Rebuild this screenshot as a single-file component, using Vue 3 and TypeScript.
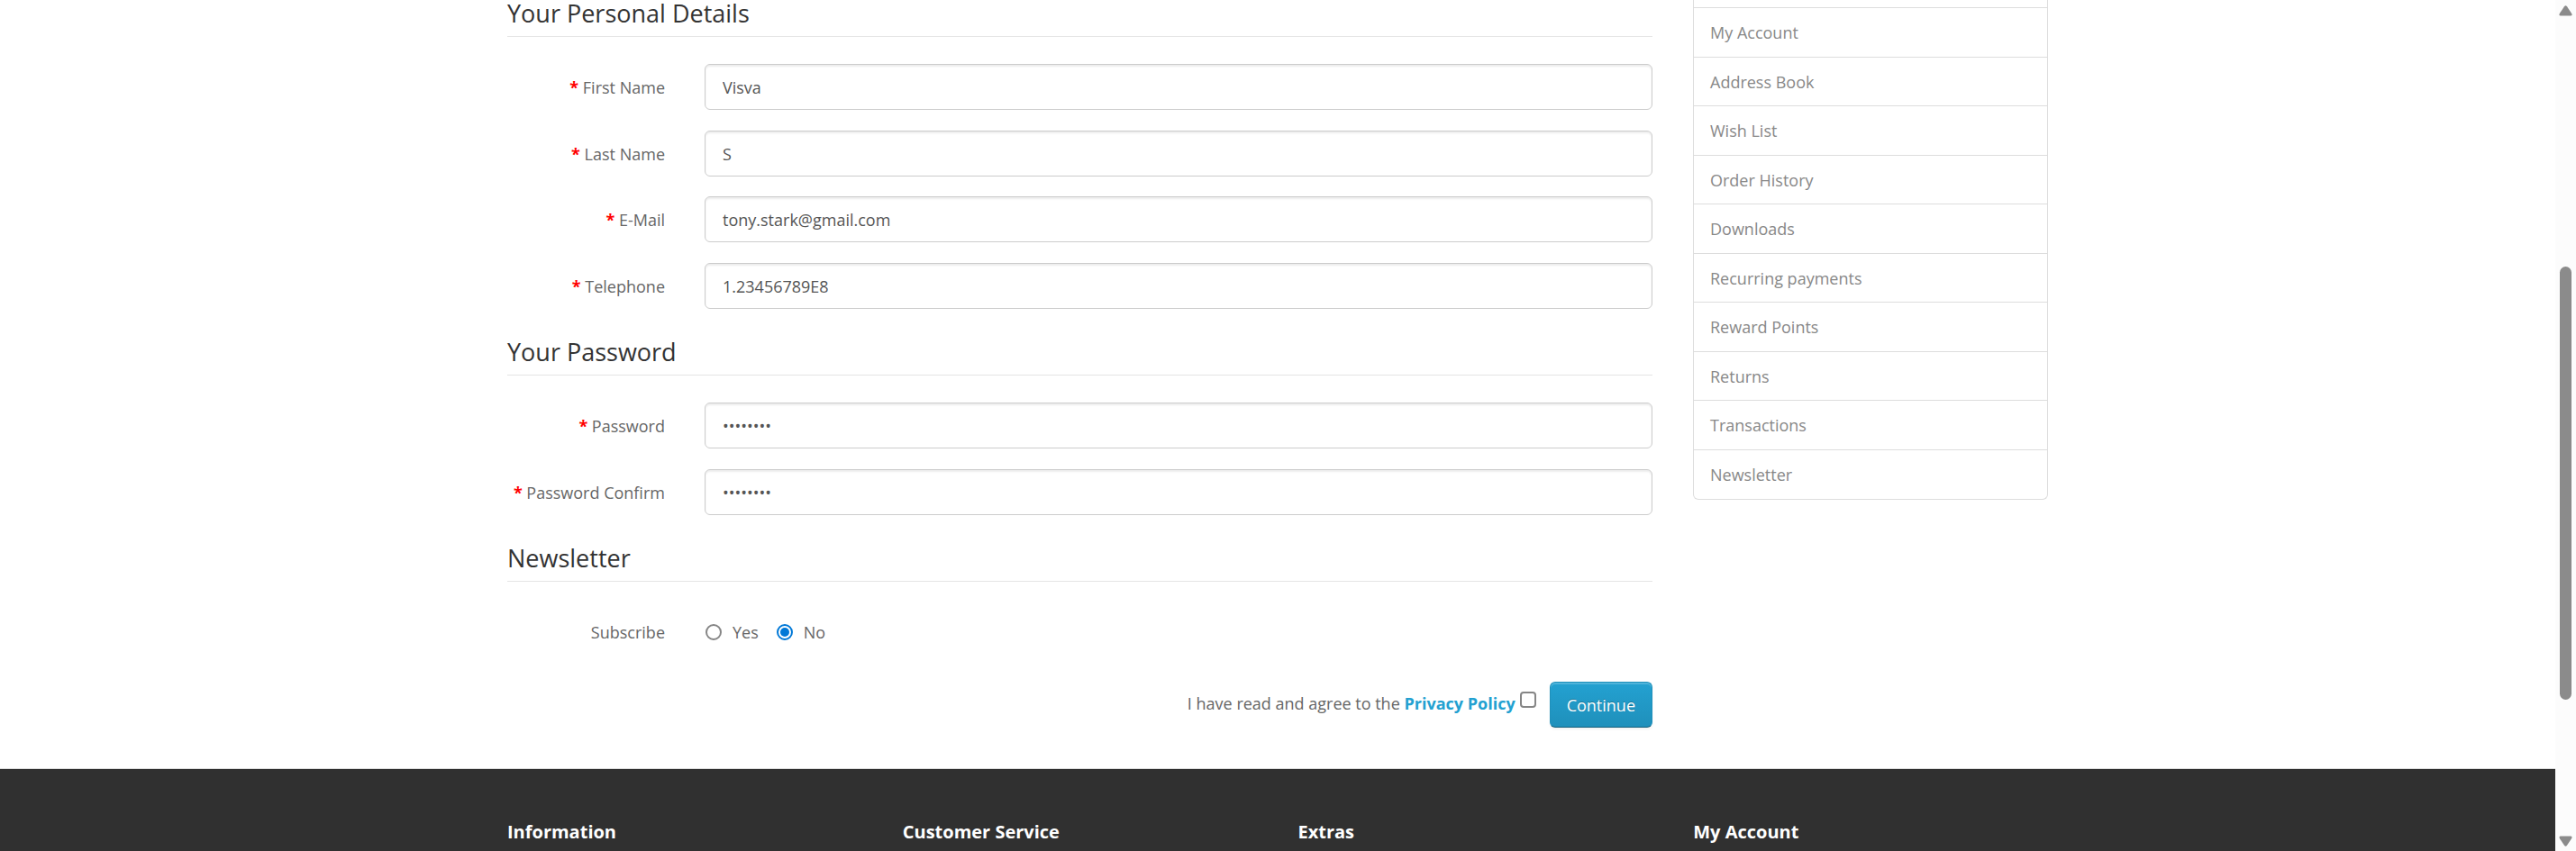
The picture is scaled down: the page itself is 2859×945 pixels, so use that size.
<script setup lang="ts">
import { ref } from 'vue'

interface Field {
  id: string
  label: string
  type: string
  value: string
}

const personal = ref<Field[]>([
  { id: 'firstname', label: 'First Name', type: 'text', value: 'Visva' },
  { id: 'lastname', label: 'Last Name', type: 'text', value: 'S' },
  { id: 'email', label: 'E-Mail', type: 'email', value: 'tony.stark@gmail.com' },
  { id: 'telephone', label: 'Telephone', type: 'tel', value: '1.23456789E8' },
])

const passwords = ref<Field[]>([
  { id: 'password', label: 'Password', type: 'password', value: 'password' },
  { id: 'confirm', label: 'Password Confirm', type: 'password', value: 'password' },
])

const newsletter = ref('0')
const agree = ref(false)

const accountLinks: string[] = [
  'My Account',
  'Address Book',
  'Wish List',
  'Order History',
  'Downloads',
  'Recurring payments',
  'Reward Points',
  'Returns',
  'Transactions',
  'Newsletter',
]

const footerColumns: string[] = ['Information', 'Customer Service', 'Extras', 'My Account']
</script>

<template>
  <div class="shell">
    <div class="page">
      <div class="container content">
        <form class="register" @submit.prevent>
          <fieldset>
            <legend>Your Personal Details</legend>
            <div v-for="field in personal" :key="field.id" class="group">
              <label :for="field.id"><span class="star">* </span>{{ field.label }}</label>
              <input :id="field.id" v-model="field.value" class="control" :type="field.type" />
            </div>
          </fieldset>
          <fieldset>
            <legend>Your Password</legend>
            <div v-for="field in passwords" :key="field.id" class="group">
              <label :for="field.id"><span class="star">* </span>{{ field.label }}</label>
              <input :id="field.id" v-model="field.value" class="control" :type="field.type" />
            </div>
          </fieldset>
          <fieldset>
            <legend>Newsletter</legend>
            <div class="group">
              <span id="subscribe" class="caption">Subscribe</span>
              <div class="radios" role="radiogroup" aria-labelledby="subscribe">
                <label><input v-model="newsletter" type="radio" name="newsletter" value="1" />Yes</label>
                <label><input v-model="newsletter" type="radio" name="newsletter" value="0" />No</label>
              </div>
            </div>
          </fieldset>
          <div class="actions">
            <label for="agree">I have read and agree to the <a href="#privacy">Privacy Policy</a></label>
            <input id="agree" v-model="agree" type="checkbox" />
            <button type="submit">Continue</button>
          </div>
        </form>
        <nav class="account" aria-label="Account">
          <a v-for="link in accountLinks" :key="link" href="#account">{{ link }}</a>
        </nav>
      </div>
      <footer>
        <div class="container columns">
          <h5 v-for="title in footerColumns" :key="title">{{ title }}</h5>
        </div>
      </footer>
    </div>
    <div class="scrollbar" aria-hidden="true">
      <svg width="15" height="12" viewBox="0 0 15 12">
        <path d="M6 1.2Q7.500-.8 9 1.200L14.200 9Q15.200 11.500 13 11.500H2Q-.2 11.500 .8 9Z" fill="#8b8b8b" />
      </svg>
      <div class="track"><div class="thumb"></div></div>
      <svg width="15" height="12" viewBox="0 0 15 12">
        <path d="M6 10.800Q7.500 12.800 9 10.800L14.200 3Q15.200 .5 13 .5H2Q-.2 .5 .8 3Z" fill="#8b8b8b" />
      </svg>
    </div>
  </div>
</template>

<style>
body {
  margin: 0;
  background: #fff;
}
</style>

<style scoped>
.shell {
  display: flex;
  height: 100vh;
  overflow: hidden;
  font-family: "Open Sans", "Noto Sans", sans-serif;
  font-size: 18px;
  line-height: 30px;
  color: #666;
}
.page {
  flex: 1;
  min-width: 0;
  display: flex;
  flex-direction: column;
}
.container {
  box-sizing: border-box;
  width: 100%;
  max-width: 1710px;
  margin: 0 auto;
}
.content {
  display: grid;
  grid-template-columns: minmax(0, 1fr) 394px;
  column-gap: 45px;
  align-items: start;
  padding-bottom: 45px;
}
fieldset {
  min-width: 0;
  margin: 0;
  padding: 0;
  border: 0;
}
legend {
  box-sizing: border-box;
  width: 100%;
  margin-bottom: 30px;
  padding: 11px 0 10px;
  border-bottom: 1px solid #e5e5e5;
  font-size: 27px;
  line-height: 30px;
  color: #333;
}
fieldset:first-child legend {
  padding-top: 0;
}
.group {
  display: grid;
  grid-template-columns: 175px minmax(0, 1fr);
  column-gap: 44px;
  margin-bottom: 23px;
}
.group:nth-of-type(even) {
  margin-bottom: 22px;
}
.group > label,
.caption {
  padding-top: 11px;
  text-align: right;
}
.star {
  font-weight: 700;
  color: #f00;
}
.control {
  box-sizing: border-box;
  width: 100%;
  height: 51px;
  padding: 9px 19px;
  border: 1px solid #ccc;
  border-radius: 6px;
  background: #fff;
  box-shadow: inset 0 2px 2px rgba(0, 0, 0, 0.075);
  font: inherit;
  color: #555;
}
.radios {
  display: flex;
  gap: 20px;
  padding: 11px 1px 0;
}
.radios label {
  display: flex;
  align-items: center;
  gap: 12px;
}
input[type="radio"],
input[type="checkbox"] {
  box-sizing: border-box;
  width: 18px;
  height: 18px;
  margin: 0;
  accent-color: #0078d7;
}
input[type="radio"] {
  appearance: none;
  display: grid;
  place-items: center;
  border: 2px solid #868686;
  border-radius: 50%;
}
input[type="radio"]:checked {
  border-color: #0078d7;
}
input[type="radio"]:checked::before {
  content: "";
  width: 10px;
  height: 10px;
  border-radius: 50%;
  background: #0078d7;
}
input[type="checkbox"]:not(:checked) {
  appearance: none;
  border: 2px solid #868686;
  border-radius: 4px;
}
.actions {
  display: flex;
  align-items: center;
  justify-content: flex-end;
  margin-top: 17px;
}
.actions label {
  padding-bottom: 4px;
}
.actions a {
  color: #23a1d1;
  font-weight: 700;
  text-decoration: none;
}
.actions input[type="checkbox"] {
  margin: 0 15px 11px 5px;
}
button {
  height: 51px;
  padding: 0 18px;
  border: 1px solid;
  border-color: #1f90bb #1f90bb #145e7a;
  border-radius: 6px;
  background: linear-gradient(#23a1d1, #1f90bb);
  box-shadow: inset 0 2px 0 rgba(255, 255, 255, 0.2), 0 2px 3px rgba(0, 0, 0, 0.05);
  font: inherit;
  color: #fff;
  text-shadow: 0 -1px 0 rgba(0, 0, 0, 0.25);
}
.account {
  display: flex;
  flex-direction: column;
  border: 1px solid #ddd;
  border-top: 0;
  border-radius: 0 0 6px 6px;
}
.account::before {
  content: "";
  height: 8px;
}
.account a {
  padding: 12px 18px;
  border-top: 1px solid #ddd;
  color: #888;
  text-decoration: none;
}
.account a:nth-child(even):not(:last-child) {
  padding-bottom: 11px;
}
footer {
  flex: 1;
  padding-top: 55px;
  border-top: 1px solid #ddd;
  background: #303030;
}
.columns {
  display: grid;
  grid-template-columns: repeat(4, minmax(0, 1fr));
  column-gap: 45px;
}
h5 {
  margin: 0;
  font-size: 20px;
  line-height: 30px;
  font-weight: 700;
  color: #fff;
}
.scrollbar {
  box-sizing: border-box;
  width: 23px;
  padding: 6px 4px 5px;
  background: #fcfcfc;
  display: flex;
  flex-direction: column;
}
.track {
  flex: 1;
  display: grid;
  grid-template-rows: 278fr 481fr 151fr;
  padding: 0 1px;
}
.thumb {
  grid-row: 2;
  border-radius: 7px;
  background: #8b8b8b;
}
</style>
